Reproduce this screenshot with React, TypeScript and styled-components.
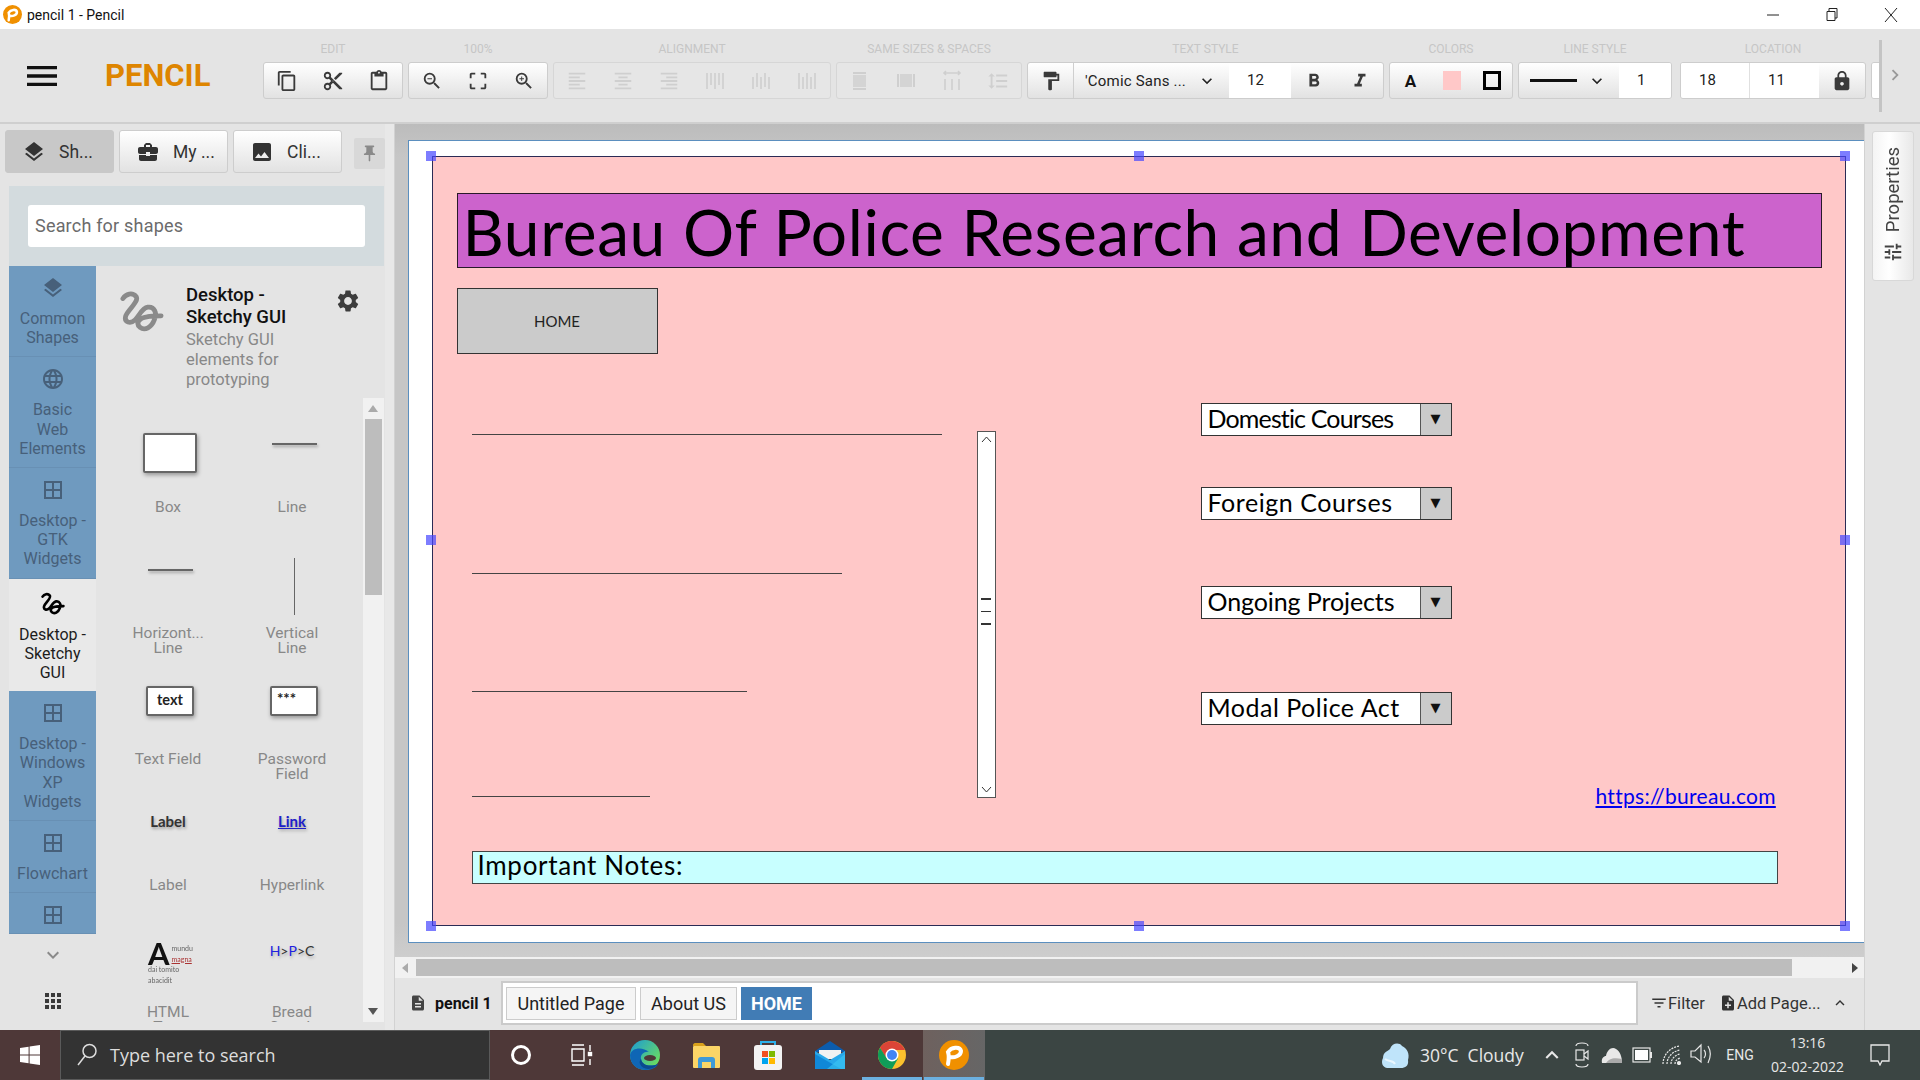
import React from 'react';
import styled, { createGlobalStyle } from 'styled-components';
import {
  MdApps,
  MdBorderAll,
  MdBusinessCenter,
  MdChevronRight,
  MdContentCopy,
  MdContentCut,
  MdContentPaste,
  MdCropFree,
  MdDescription,
  MdFilterList,
  MdFormatAlignCenter,
  MdFormatAlignLeft,
  MdFormatAlignRight,
  MdFormatBold,
  MdFormatItalic,
  MdFormatLineSpacing,
  MdFormatPaint,
  MdImage,
  MdKeyboardArrowDown,
  MdKeyboardArrowUp,
  MdLanguage,
  MdLayers,
  MdLock,
  MdMenu,
  MdNoteAdd,
  MdPushPin,
  MdSettings,
  MdTune,
  MdZoomIn,
  MdZoomOut,
} from 'react-icons/md';

const GlobalStyle = createGlobalStyle`
  html, body {
    margin: 0;
    padding: 0;
    width: 100%;
    height: 100%;
    overflow: hidden;
  }
  * {
    box-sizing: border-box;
  }
`;

const SKETCH = `"Comic Sans MS", Lato, sans-serif`;

// Window shell
const Shell = styled.div`
  display: grid;
  grid-template-rows: 29px 95px 906px 50px;
  width: 1920px;
  height: 1080px;
  overflow: hidden;
  background: #e4e4e4;
  font-family: Roboto, sans-serif;
`;

const TitleBar = styled.div`
  display: flex;
  align-items: center;
  background: #fff;
  padding-left: 3px;
`;

const TitleText = styled.span`
  margin-left: 5px;
  font-size: 14px;
  color: #111;
  flex: 1;
`;

const WindowButton = styled.div`
  display: flex;
  align-items: center;
  justify-content: center;
  width: 59px;
  height: 29px;
  color: #222;
`;

// Toolbar
const Toolbar = styled.div`
  display: flex;
  position: relative;
  background: #e4e4e4;
  border-bottom: 2px solid #cfcfcf;
`;

const MenuButton = styled.div`
  display: flex;
  align-items: center;
  justify-content: center;
  width: 84px;
  height: 93px;
  color: #111;
`;

const Brand = styled.div`
  width: 179px;
  padding: 29px 0 0 21px;
  color: #de8500;
  font-size: 31px;
  line-height: 36px;
  font-weight: 700;
`;

const ToolScroller = styled.div`
  display: flex;
  gap: 5px;
  width: 1617px;
  overflow: hidden;
`;

const ToolGroup = styled.div<{ $ml?: number }>`
  display: flex;
  flex-direction: column;
  align-items: center;
  flex: none;
  margin-left: ${(p) => p.$ml ?? 0}px;
`;

const GroupLabel = styled.div`
  height: 33px;
  padding-top: 13px;
  font-size: 12px;
  line-height: 15px;
  color: #c6c6c6;
  white-space: nowrap;
`;

const ToolBox = styled.div<{ $off?: boolean }>`
  display: flex;
  height: 37px;
  border-radius: 3px;
  overflow: hidden;
  border: 1px solid ${(p) => (p.$off ? '#d6d6d6' : '#cdcdcd')};
  background: ${(p) => (p.$off ? '#e6e6e6' : 'linear-gradient(#fff, #e2e2e2)')};
`;

const ToolButton = styled.div<{ $w?: number; $off?: boolean; $line?: boolean }>`
  display: flex;
  align-items: center;
  justify-content: center;
  width: ${(p) => p.$w ?? 46}px;
  flex: none;
  color: ${(p) => (p.$off ? '#cfcfcf' : '#3a3a3a')};
  font-size: 22px;
  border-right: ${(p) => (p.$line ? '1px solid #cfcfcf' : 'none')};
`;

const ToolSelect = styled.div<{ $w: number }>`
  display: flex;
  align-items: center;
  justify-content: space-between;
  width: ${(p) => p.$w}px;
  flex: none;
  padding: 0 12px 0 11px;
  font-size: 15px;
  letter-spacing: 0.2px;
  color: #222;
  white-space: nowrap;
`;

const ToolInput = styled.div<{ $w: number; $line?: boolean }>`
  width: ${(p) => p.$w}px;
  flex: none;
  background: #fff;
  padding: 8px 0 0 18px;
  font-size: 15px;
  line-height: 18px;
  color: #222;
  border-right: ${(p) => (p.$line ? '1px solid #e0e0e0' : 'none')};
`;

const ColorA = styled.span`
  font-size: 17px;
  font-weight: 700;
  color: #111;
`;

const FillSwatch = styled.span`
  width: 18px;
  height: 19px;
  background: #ffc8c8;
`;

const StrokeSwatch = styled.span`
  width: 18px;
  height: 19px;
  border: 3px solid #000;
`;

const LineSample = styled.span`
  width: 47px;
  height: 3px;
  background: #111;
`;

const ToolEdge = styled.div`
  position: absolute;
  left: 1879px;
  top: 11px;
  width: 3px;
  height: 72px;
  background: #c4c4c4;
`;

const ToolArrow = styled.div`
  position: absolute;
  left: 1884px;
  top: 35px;
  color: #999;
  font-size: 22px;
  display: flex;
`;

// Main row
const MainRow = styled.div`
  display: grid;
  grid-template-columns: 395px 1469px 56px;
  min-height: 0;
`;

const LeftPanel = styled.div`
  display: flex;
  flex-direction: column;
  min-height: 0;
  padding: 6px 10px 0 9px;
  border-right: 1px solid #d2d2d2;
  box-shadow: inset -9px 0 0 #e8e8e8;
`;

const TabRow = styled.div`
  display: flex;
  gap: 5px;
  height: 43px;
  margin: 0 -1px 13px -4px;
  align-items: flex-start;
`;

const PanelTab = styled.div<{ $active?: boolean }>`
  display: flex;
  align-items: center;
  gap: 13px;
  width: 109px;
  height: 43px;
  padding-left: 16px;
  border-radius: 3px;
  border: 1px solid ${(p) => (p.$active ? '#c8c8c8' : '#cdcdcd')};
  background: ${(p) => (p.$active ? '#c8c8c8' : 'linear-gradient(#fff, #e2e2e2)')};
  color: #333;
  font-size: 17.5px;
  svg {
    font-size: 24px;
    flex: none;
  }
`;

const PinButton = styled.div`
  display: flex;
  align-items: center;
  justify-content: center;
  width: 31px;
  height: 31px;
  margin: 8px 0 0 7px;
  border-radius: 2px;
  background: #d8d8d8;
  color: #8a8a8a;
  font-size: 19px;
`;

const SearchPanel = styled.div`
  height: 80px;
  padding: 19px 19px 0;
  background: #d3dbde;
`;

const SearchBox = styled.div`
  height: 42px;
  padding: 0 7px;
  border-radius: 3px;
  background: #fff;
  color: #6b6b6b;
  font-size: 18px;
  letter-spacing: 0.2px;
  line-height: 42px;
`;

const PanelBody = styled.div`
  display: flex;
  flex: 1;
  min-height: 0;
`;

const CategoryColumn = styled.div`
  display: flex;
  flex-direction: column;
  width: 87px;
  flex: none;
`;

const Category = styled.div<{ $active?: boolean; $cut?: boolean }>`
  display: flex;
  flex-direction: column;
  align-items: center;
  gap: 9px;
  flex: none;
  height: ${(p) => (p.$cut ? '41px' : 'auto')};
  padding: ${(p) => (p.$active ? '13px 0 8px' : '10px 0 9px')};
  overflow: hidden;
  background: ${(p) => (p.$active ? '#e9e9e9' : '#6f9abf')};
  color: ${(p) => (p.$active ? '#1c1c1c' : '#47607a')};
  border-bottom: 1px solid ${(p) => (p.$active ? '#e9e9e9' : '#6890b4')};
  font-size: 16px;
  line-height: 19.2px;
  text-align: center;
  svg {
    flex: none;
    width: 24px;
    height: 24px;
  }
`;

const CategoryLine = styled.div`
  white-space: nowrap;
`;

const CategoryFoot = styled.div`
  display: flex;
  flex-direction: column;
  align-items: center;
  padding-top: 9px;
  gap: 22px;
  color: #8a8a8a;
  font-size: 24px;
`;

const FootGrid = styled.span`
  display: flex;
  color: #3a3a3a;
`;

const ShapesPane = styled.div`
  display: flex;
  flex-direction: column;
  flex: 1;
  min-width: 0;
  padding-bottom: 8px;
`;

const PaneHeader = styled.div`
  display: flex;
  height: 132px;
  flex: none;
  padding: 18px 0 0 24px;
  > svg {
    flex: none;
    margin-top: 6px;
  }
`;

const PaneHeaderText = styled.div`
  width: 149px;
  margin-left: 22px;
  color: #888;
  font-size: 16.5px;
  line-height: 20px;
`;

const PaneTitle = styled.div`
  width: 110px;
  margin-bottom: 2px;
  color: #111;
  font-weight: 500;
  font-size: 18.5px;
  line-height: 22px;
`;

const GearButton = styled.div`
  display: flex;
  font-size: 26px;
  color: #3d3d3d;
  margin-top: 4px;
`;

const ShapesScroll = styled.div`
  display: flex;
  flex: 1;
  min-height: 0;
`;

const ShapeGrid = styled.div`
  display: grid;
  grid-template-columns: 124px 124px;
  grid-auto-rows: 126.25px;
  width: 268px;
  padding: 18px 0 0 10px;
  overflow: hidden;
`;

const ShapeCell = styled.div`
  display: flex;
  flex-direction: column;
  align-items: center;
`;

const ShapePreview = styled.div`
  display: flex;
  justify-content: center;
  height: 83.5px;
  width: 100%;
  padding-left: 4px;
`;

const ShapeName = styled.div`
  color: #888;
  font-size: 15.5px;
  line-height: 15px;
  text-align: center;
  width: 71px;
`;

const BoxPreview = styled.div`
  margin-top: 17px;
  width: 54px;
  height: 40px;
  background: #fff;
  border: 2px solid #666;
  border-radius: 2px;
  box-shadow: 1px 2px 4px rgba(0, 0, 0, 0.35);
`;

const FieldPreview = styled.div`
  margin-top: 17px;
  width: 48px;
  height: 30px;
  background: #fff;
  border: 2px solid #666;
  border-radius: 2px;
  box-shadow: 1px 2px 4px rgba(0, 0, 0, 0.35);
  font-family: ${SKETCH};
  font-weight: 700;
  font-size: 14.5px;
  line-height: 24px;
  text-align: center;
  color: #222;
`;

const DotsText = styled.div`
  font-size: 15px;
  line-height: 16px;
  padding: 2px 0 0 5px;
  text-align: left;
`;

const LinePreview = styled.div`
  margin-top: 27px;
  width: 45px;
  height: 2px;
  background: #666;
  box-shadow: 1px 2px 3px rgba(0, 0, 0, 0.3);
`;

const VerticalPreview = styled.div`
  margin-top: 16px;
  width: 1px;
  height: 57px;
  background: #666;
`;

const LabelPreview = styled.div`
  margin: 17px 0 0 -4px;
  font-family: ${SKETCH};
  font-weight: 700;
  font-size: 15px;
  line-height: 18px;
  color: #333;
  text-shadow: 1px 2px 3px rgba(0, 0, 0, 0.3);
`;

const LinkPreview = styled(LabelPreview)`
  color: #2020c8;
  text-decoration: underline;
`;

const CrumbPreview = styled.div`
  margin: 22px 0 0 -4px;
  font-family: ${SKETCH};
  font-size: 14px;
  line-height: 16px;
  color: #333;
  text-shadow: 1px 2px 3px rgba(0, 0, 0, 0.25);
  b {
    color: #2020e0;
    font-weight: 400;
  }
`;

const HtmlPreview = styled.div`
  margin-top: 22px;
  width: 44px;
  font-family: ${SKETCH};
  font-size: 7px;
  line-height: 10.5px;
  color: #666;
  filter: blur(0.3px);
`;

const HtmlHead = styled.div`
  display: flex;
  gap: 2px;
`;

const HtmlLetter = styled.span`
  font-size: 31px;
  font-weight: 700;
  line-height: 21px;
  color: #111;
`;

const HtmlAccent = styled.div`
  color: #a33;
  text-decoration: underline;
`;

const ScrollTrack = styled.div`
  position: relative;
  width: 21px;
  background: #f1f1f1;
`;

const ScrollThumb = styled.div`
  position: absolute;
  left: 2px;
  top: 21px;
  width: 17px;
  height: 176px;
  background: #bdbdbd;
`;

const ScrollArrow = styled.span<{ $down?: boolean; $dark?: boolean }>`
  position: absolute;
  left: 5px;
  ${(p) => (p.$down ? 'bottom: 7px;' : 'top: 7px;')}
  width: 0;
  height: 0;
  border-left: 5px solid transparent;
  border-right: 5px solid transparent;
  ${(p) =>
    p.$down
      ? `border-top: 7px solid ${p.$dark ? '#555' : '#aaa'};`
      : `border-bottom: 7px solid ${p.$dark ? '#555' : '#aaa'};`}
`;

// Canvas
const CenterColumn = styled.div`
  display: flex;
  flex-direction: column;
  min-width: 0;
`;

const CanvasArea = styled.div`
  display: flex;
  height: 833px;
  flex: none;
  padding: 16px 0 14px 13px;
  background: linear-gradient(#bcbcbc, #c6c6c6 4%, #c6c6c6 96%, #cdcdcd);
`;

const Page = styled.div`
  display: flex;
  flex: 1;
  padding: 15px 18px 16px 23px;
  background: #fff;
  border: 1px solid #5b8fbf;
  border-right: none;
`;

const Drawing = styled.div`
  position: relative;
  flex: 1;
  background: #ffc8c8;
  border: 1.5px solid #2b2b55;
  font-family: ${SKETCH};
`;

const Placed = styled.div<{ $x: number; $y: number; $w: number; $h: number }>`
  position: absolute;
  left: ${(p) => p.$x - 433.5}px;
  top: ${(p) => p.$y - 157.5}px;
  width: ${(p) => p.$w}px;
  height: ${(p) => p.$h}px;
`;

const TitleBanner = styled(Placed)`
  background: #cc63cc;
  border: 1.5px solid #2a1a2a;
  padding-left: 5px;
  color: #000;
  font-size: 64px;
  line-height: 75px;
  white-space: nowrap;
  letter-spacing: 0.63px;
`;

const HomeBox = styled(Placed)`
  display: flex;
  align-items: center;
  justify-content: center;
  background: #cbcbcb;
  border: 1.5px solid #333;
  font-size: 15px;
  color: #222;
`;

const SketchLine = styled(Placed)`
  background: #444;
`;

const VScroll = styled(Placed)`
  background: #fff;
  border: 1.5px solid #555;
  display: flex;
  flex-direction: column;
  align-items: center;
  justify-content: space-between;
  padding: 4px 0;
  color: #333;
  font-size: 16px;
`;

const VGrip = styled.div`
  display: flex;
  flex-direction: column;
  gap: 11px;
  margin-top: -5px;
`;

const VGripBar = styled.span`
  display: block;
  width: 10px;
  height: 1.5px;
  background: #333;
`;

const Dropdown = styled(Placed)`
  display: flex;
  background: #fff;
  border: 1.5px solid #333;
  font-size: 25px;
  line-height: 28px;
  color: #000;
`;

const DropdownText = styled.div<{ $spacing: number }>`
  flex: 1;
  padding-left: 6px;
  letter-spacing: ${(p) => p.$spacing}px;
  white-space: nowrap;
`;

const DropdownArrow = styled.div`
  display: flex;
  align-items: center;
  justify-content: center;
  width: 31px;
  background: #cbcbcb;
  border-left: 1.5px solid #555;
  font-size: 13px;
  color: #111;
  font-family: 'DejaVu Sans', sans-serif;
`;

const LinkText = styled(Placed)`
  color: #0000ee;
  font-size: 21px;
  letter-spacing: 0.3px;
  line-height: 24px;
  text-decoration: underline;
  white-space: nowrap;
`;

const NoteBox = styled(Placed)`
  background: #c8ffff;
  border: 1.5px solid #444;
  padding-left: 5px;
  font-size: 26px;
  line-height: 27px;
  color: #000;
  letter-spacing: 0.7px;
`;

const Handle = styled.span<{ $x: number; $y: number }>`
  position: absolute;
  left: ${(p) => p.$x - 438.5}px;
  top: ${(p) => p.$y - 162.5}px;
  width: 10px;
  height: 10px;
  background: rgba(70, 70, 255, 0.7);
`;

const HScroll = styled.div`
  display: flex;
  align-items: center;
  height: 21px;
  flex: none;
  background: #f1f1f1;
  position: relative;
`;

const HThumb = styled.div`
  margin-left: 21px;
  width: 1376px;
  height: 17px;
  background: #bdbdbd;
`;

const HArrow = styled.span<{ $right?: boolean }>`
  position: absolute;
  top: 6px;
  ${(p) => (p.$right ? 'right: 6px;' : 'left: 7px;')}
  width: 0;
  height: 0;
  border-top: 5px solid transparent;
  border-bottom: 5px solid transparent;
  ${(p) => (p.$right ? 'border-left: 6px solid #444;' : 'border-right: 6px solid #aaa;')}
`;

const PagesBar = styled.div`
  display: flex;
  align-items: center;
  flex: 1;
  padding: 0 0 2px 14px;
  background: #e4e4e4;
  font-size: 16px;
`;

const DocName = styled.div`
  display: flex;
  align-items: center;
  gap: 8px;
  width: 92px;
  font-weight: 700;
  color: #111;
  svg {
    font-size: 18px;
    color: #444;
    flex: none;
  }
`;

const PageTabs = styled.div`
  display: flex;
  align-items: center;
  gap: 4px;
  width: 1137px;
  height: 44px;
  padding-left: 3px;
  background: #fff;
  border: 2px solid #cbcbcb;
`;

const PageTab = styled.div<{ $w: number; $active?: boolean }>`
  display: flex;
  align-items: center;
  justify-content: center;
  width: ${(p) => p.$w}px;
  height: 33px;
  font-size: 18px;
  font-weight: ${(p) => (p.$active ? 700 : 400)};
  color: ${(p) => (p.$active ? '#fff' : '#222')};
  background: ${(p) => (p.$active ? '#417cb5' : '#f5f5f5')};
  border: 1px solid ${(p) => (p.$active ? '#417cb5' : '#ccc')};
`;

const PageAction = styled.div<{ $ml: number }>`
  display: flex;
  align-items: center;
  margin-left: ${(p) => p.$ml}px;
  color: #333;
  white-space: nowrap;
  font-size: 16.5px;
  svg {
    font-size: 18px;
    flex: none;
  }
`;

const RightDock = styled.div`
  padding: 7px 7px 0;
  background: #e4e4e4;
  border-left: 1px solid #d2d2d2;
`;

const PropertiesButton = styled.div`
  display: flex;
  flex-direction: column;
  align-items: center;
  gap: 9px;
  width: 42px;
  height: 150px;
  padding-top: 15px;
  border: 1px solid #d8d8d8;
  border-radius: 3px;
  background: linear-gradient(to right, #f4f4f4, #fff 40%, #e8e8e8);
  color: #444;
  svg {
    font-size: 22px;
  }
`;

const PropertiesText = styled.span`
  writing-mode: vertical-rl;
  transform: rotate(180deg);
  font-size: 18.5px;
  line-height: 20px;
`;

// Taskbar
const TaskBar = styled.div`
  display: flex;
  color: #fff;
`;

const TaskLeft = styled.div`
  display: flex;
  align-items: stretch;
  width: 985px;
  background: #4e3838;
`;

const StartButton = styled.div`
  display: flex;
  align-items: center;
  justify-content: center;
  width: 60px;
`;

const TaskSearch = styled.div`
  display: flex;
  align-items: center;
  gap: 12px;
  width: 430px;
  padding-left: 15px;
  background: #333;
  border: 1px solid #5a5a5a;
  color: #ddd;
  font-family: 'Open Sans', sans-serif;
  font-size: 18px;
`;

const TaskSlot = styled.div<{ $active?: boolean; $running?: boolean }>`
  position: relative;
  display: flex;
  align-items: center;
  justify-content: center;
  width: 61.9px;
  background: ${(p) => (p.$active ? 'linear-gradient(to right, #6e615e, #666)' : 'none')};
  ${(p) =>
    p.$running
      ? `&::after {
    content: '';
    position: absolute;
    left: 1px;
    right: 1px;
    bottom: 0;
    height: 3px;
    background: #6cb0e0;
  }`
      : ''}
`;

const TaskRight = styled.div`
  display: flex;
  align-items: center;
  justify-content: flex-end;
  flex: 1;
  padding-right: 10px;
  background: #3b4543;
`;

const WeatherItem = styled.div`
  display: flex;
  align-items: center;
  gap: 10px;
  width: 156px;
  font-family: 'Open Sans', sans-serif;
  font-size: 17.5px;
  color: #e8e8e8;
  white-space: pre;
`;

const TraySlot = styled.div<{ $w?: number }>`
  display: flex;
  align-items: center;
  justify-content: center;
  width: ${(p) => p.$w ?? 30}px;
  height: 50px;
  color: #e8e8e8;
`;

const LangText = styled.span`
  font-size: 14px;
  color: #e8e8e8;
`;

const ClockText = styled.div`
  text-align: center;
  font-family: 'Open Sans', sans-serif;
  font-size: 14px;
  line-height: 24px;
  color: #e8e8e8;
  white-space: nowrap;
`;

// Drawn icons
const PencilLogo = ({ size }: { size: number }) => (
  <svg width={size} height={size} viewBox="0 0 30 30">
    <circle cx="15" cy="15" r="15" fill="#f09000" />
    <path
      d="M9 24 C10 19 10 15 9 12 C12 7 21 6 22 11 C22 16 15 18 11 17"
      fill="none"
      stroke="#fff"
      strokeWidth="4"
      strokeLinecap="round"
    />
  </svg>
);

const SquiggleIcon = ({ size, color }: { size: number; color: string }) => (
  <svg width={size} height={size} viewBox="0 0 46 44">
    <path
      d="M3 8 C6 3 13 1 17 6 C20 11 8 20 6 26 C4 33 11 35 16 30 C20 26 23 18 29 17 C36 16 39 23 36 30 C33 38 26 42 21 38 C16 34 20 28 28 27 C33 26 38 26 43 26"
      fill="none"
      stroke={color}
      strokeWidth="5"
      strokeLinecap="round"
    />
  </svg>
);

const BarsIcon = ({ dy }: { dy: number[] }) => (
  <svg width="20" height="20" viewBox="0 0 20 20" fill="none" stroke="currentColor" strokeWidth="1.6">
    {[2, 6, 10, 14, 18].map((x, i) => (
      <path key={x} d={`M${x} ${i % 2 ? dy[0] : dy[1]}V${i % 2 ? dy[2] : 18}`} />
    ))}
  </svg>
);

const SameHeightIcon = () => (
  <svg width="18" height="20" viewBox="0 0 18 20" fill="currentColor">
    <rect x="2" y="1" width="13" height="2" />
    <rect x="2" y="4" width="13" height="12" opacity="0.8" />
    <rect x="2" y="17" width="13" height="2" />
  </svg>
);

const SameWidthIcon = () => (
  <svg width="20" height="18" viewBox="0 0 20 18" fill="currentColor">
    <rect x="1" y="2" width="2" height="13" />
    <rect x="4" y="2" width="12" height="13" opacity="0.8" />
    <rect x="17" y="2" width="2" height="13" />
  </svg>
);

const SpaceHIcon = () => (
  <svg width="20" height="22" viewBox="0 0 20 22" fill="none" stroke="currentColor" strokeWidth="1.6">
    <path d="M2 3H18M4 1L2 3L4 5M16 1L18 3L16 5M3 9V20M10 9V20M17 9V20" />
  </svg>
);

const WindowsLogo = () => (
  <svg width="20" height="20" viewBox="0 0 20 20" fill="#fff">
    <path d="M0 3L8.6 1.8V9.5H0ZM9.6 1.6L20 0V9.5H9.6ZM0 10.5H8.6V18.2L0 17ZM9.6 10.5H20V20L9.6 18.4Z" />
  </svg>
);

const SearchGlass = () => (
  <svg width="22" height="24" viewBox="0 0 22 24" fill="none" stroke="#ddd" strokeWidth="1.5">
    <circle cx="13.5" cy="8" r="6.5" />
    <path d="M9 13L2 22" />
  </svg>
);

const CortanaIcon = () => (
  <svg width="22" height="22" viewBox="0 0 22 22">
    <circle cx="11" cy="11" r="8.5" fill="none" stroke="#fff" strokeWidth="3" />
  </svg>
);

const TaskViewIcon = () => (
  <svg width="24" height="22" viewBox="0 0 24 22" fill="none" stroke="#fff" strokeWidth="1.4">
    <path d="M1 1H13M1 21H13M1 5H13V17H1ZM19 1V7M19 15V21" />
    <rect x="17.5" y="8.5" width="3" height="3" fill="#fff" />
  </svg>
);

const EdgeIcon = () => (
  <svg width="32" height="32" viewBox="0 0 32 32">
    <defs>
      <linearGradient id="edgeTop" x1="0" y1="0" x2="1" y2="0.8">
        <stop offset="0" stopColor="#1a9ad6" />
        <stop offset="1" stopColor="#6fe05a" />
      </linearGradient>
    </defs>
    <circle cx="16" cy="16" r="15" fill="url(#edgeTop)" />
    <path d="M1 16 C1 26 9 31 16 31 C22 31 27 29 29 25 C22 28 13 27 12 20 C11 15 16 12 20 13 C14 8 3 8 1 16Z" fill="#0f66b5" />
    <path d="M12 20 C13 27 22 28 29 25 C25 31 14 32 11 25 C10 23 11 21 12 20Z" fill="#0b4b8f" />
    <ellipse cx="21" cy="19" rx="6" ry="3" fill="#4e3838" />
  </svg>
);

const ExplorerIcon = () => (
  <svg width="29" height="27" viewBox="0 0 29 27">
    <path d="M1 3C1 2 2 1 3 1H11L14 4H1Z" fill="#d9a11c" />
    <rect x="1" y="4" width="27" height="22" rx="1" fill="#fbd567" />
    <path d="M6 26V18C6 16 7 15 9 15H20C22 15 23 16 23 18V26H19V20H10V26Z" fill="#3f9ad8" />
  </svg>
);

const StoreIcon = () => (
  <svg width="30" height="30" viewBox="0 0 30 30">
    <path d="M8 6V2H22V6" fill="none" stroke="#2cb0ea" strokeWidth="2" />
    <rect x="1" y="5" width="28" height="25" rx="3" fill="#f3f3f3" />
    <rect x="9" y="11" width="6" height="6" fill="#f25022" />
    <rect x="16" y="11" width="6" height="6" fill="#7fba00" />
    <rect x="9" y="18" width="6" height="6" fill="#00a4ef" />
    <rect x="16" y="18" width="6" height="6" fill="#ffb900" />
  </svg>
);

const MailIcon = () => (
  <svg width="30" height="29" viewBox="0 0 30 29">
    <path d="M0 10L15 0L30 10V11H0Z" fill="#0b5cae" />
    <path d="M4 9H26V18H4Z" fill="#f2f2f2" />
    <path d="M0 10L15 19L30 10V28H0Z" fill="#28a8ea" />
    <path d="M0 28V13L26 28Z" fill="#1088d8" />
    <path d="M30 13V28H12Z" fill="#3cc8f4" opacity="0.6" />
  </svg>
);

const ChromeIcon = () => (
  <svg width="28" height="28" viewBox="0 0 28 28">
    <circle cx="14" cy="14" r="14" fill="#fbc02d" />
    <path d="M14 0C9 0 4.5 2.6 2 6.7L8 17L14 9H27C24.7 3.7 19.6 0 14 0Z" fill="#db4437" />
    <path d="M2 6.7C-0.7 11 -0.7 17 2 21.3C4.5 25.5 9 28 14 28L20 17.5L8.5 17Z" fill="#0f9d58" />
    <circle cx="14" cy="14" r="6.5" fill="#fff" />
    <circle cx="14" cy="14" r="5" fill="#4285f4" />
  </svg>
);

const CloudIcon = () => (
  <svg width="29" height="27" viewBox="0 0 29 27">
    <path d="M6 26C1 25 0 20 2 16C2 10 7 9 9 7C11 1 18 0 21 4C26 6 29 12 27 18C28 24 24 26 20 26Z" fill="#bfe4fa" />
    <path d="M4 17C8 20 12 18 14 22" fill="none" stroke="#eaf7ff" strokeWidth="2" />
  </svg>
);

const TrayMeet = () => (
  <svg width="16" height="26" viewBox="0 0 16 26" fill="none" stroke="#e8e8e8" strokeWidth="1.2">
    <path d="M2 4C2 2 4 1 8 1C12 1 14 2 14 4M2 22C2 24 4 25 8 25C12 25 14 24 14 22" />
    <rect x="2" y="8" width="8" height="10" />
    <path d="M10 12L14 9V17L10 14" />
  </svg>
);

const TrayOneDrive = () => (
  <svg width="22" height="22" viewBox="0 0 22 22">
    <path d="M1 19C0 14 3 12 5 12C6 6 11 2 15 5C19 7 21 13 21 19Z" fill="#e8e8e8" />
    <path d="M5 19C8 15 12 13 21 15V19Z" fill="#aaa" />
  </svg>
);

const TrayBattery = () => (
  <svg width="20" height="16" viewBox="0 0 20 16">
    <rect x="1" y="1" width="17" height="14" fill="none" stroke="#e8e8e8" strokeWidth="1.2" />
    <rect x="3" y="3" width="13" height="10" fill="#fff" />
    <rect x="18" y="5" width="2" height="6" fill="#e8e8e8" />
  </svg>
);

const TrayWifi = () => (
  <svg width="20" height="20" viewBox="0 0 20 20" fill="none" stroke="#e8e8e8" strokeWidth="1.2">
    <path d="M1 19C1 10 8 2 18 1M5 19C5 12 11 6 18 5M9 19C9 14 13 10 18 9M13 19C13 16 15 14 18 13" strokeDasharray="2 1" />
    <circle cx="17" cy="18" r="1.5" fill="#e8e8e8" />
  </svg>
);

const TrayVolume = () => (
  <svg width="22" height="24" viewBox="0 0 22 24" fill="none" stroke="#e8e8e8" strokeWidth="1.2">
    <path d="M1 8H5L11 2V19L5 14H1Z" />
    <path d="M14 7C16 9 16 13 14 15M18 3C21 8 21 14 18 20" />
  </svg>
);

const TrayNotify = () => (
  <svg width="20" height="22" viewBox="0 0 20 22" fill="none" stroke="#e8e8e8" strokeWidth="1.3">
    <path d="M1 1H19V17H12L10 21L8 17H1Z" />
  </svg>
);

const categories = [
  { lines: ['Common', 'Shapes'], icon: <MdLayers /> },
  { lines: ['Basic', 'Web', 'Elements'], icon: <MdLanguage /> },
  { lines: ['Desktop -', 'GTK', 'Widgets'], icon: <MdBorderAll /> },
  { lines: ['Desktop -', 'Sketchy', 'GUI'], icon: <SquiggleIcon size={24} color="#000" />, active: true },
  { lines: ['Desktop -', 'Windows', 'XP', 'Widgets'], icon: <MdBorderAll /> },
  { lines: ['Flowchart'], icon: <MdBorderAll /> },
];

const shapes = [
  { name: 'Box', preview: <BoxPreview /> },
  { name: 'Line', preview: <LinePreview /> },
  { name: 'Horizont... Line', preview: <LinePreview /> },
  { name: 'Vertical Line', preview: <VerticalPreview /> },
  { name: 'Text Field', preview: <FieldPreview>text</FieldPreview> },
  { name: 'Password Field', preview: <FieldPreview><DotsText>***</DotsText></FieldPreview> },
  { name: 'Label', preview: <LabelPreview>Label</LabelPreview> },
  { name: 'Hyperlink', preview: <LinkPreview>Link</LinkPreview> },
  {
    name: 'HTML Text',
    preview: (
      <HtmlPreview>
        <HtmlHead>
          <HtmlLetter>A</HtmlLetter>
          <div>
            mundu
            <HtmlAccent>magna</HtmlAccent>
          </div>
        </HtmlHead>
        <div>dai tomito</div>
        <div>abacidit</div>
      </HtmlPreview>
    ),
  },
  {
    name: 'Bread Crumb',
    preview: (
      <CrumbPreview>
        <b>H</b>&gt;<b>P</b>&gt;C
      </CrumbPreview>
    ),
  },
];

const dropdowns = [
  { label: 'Domestic Courses', y: 403, spacing: -0.85 },
  { label: 'Foreign Courses', y: 487, spacing: 0.55 },
  { label: 'Ongoing Projects', y: 586, spacing: -0.1 },
  { label: 'Modal Police Act', y: 692, spacing: 0.5 },
];

const sketchLines = [
  { y: 434, w: 470 },
  { y: 573, w: 370 },
  { y: 691, w: 275 },
  { y: 796, w: 178 },
];

const handles = [
  [431, 156],
  [1139, 156],
  [1845, 156],
  [431, 540],
  [1845, 540],
  [431, 926],
  [1139, 926],
  [1845, 926],
];

export default function App() {
  return (
    <Shell>
      <GlobalStyle />
      <TitleBar>
        <PencilLogo size={19} />
        <TitleText>pencil 1 - Pencil</TitleText>
        <WindowButton>
          <svg width="12" height="12" viewBox="0 0 12 12" stroke="#222"><path d="M0 6H12" /></svg>
        </WindowButton>
        <WindowButton>
          <svg width="12" height="13" viewBox="0 0 12 13" fill="none" stroke="#222"><path d="M1 3.5H9V12.5H1ZM3 3V0.5H11V10H9" /></svg>
        </WindowButton>
        <WindowButton>
          <svg width="14" height="14" viewBox="0 0 14 14" stroke="#222"><path d="M1 0L13 14M13 0L1 14" /></svg>
        </WindowButton>
      </TitleBar>

      <Toolbar>
        <MenuButton><MdMenu size={40} /></MenuButton>
        <Brand>PENCIL</Brand>
        <ToolScroller>
          <ToolGroup>
            <GroupLabel>EDIT</GroupLabel>
            <ToolBox>
              <ToolButton><MdContentCopy /></ToolButton>
              <ToolButton><MdContentCut /></ToolButton>
              <ToolButton><MdContentPaste /></ToolButton>
            </ToolBox>
          </ToolGroup>
          <ToolGroup>
            <GroupLabel>100%</GroupLabel>
            <ToolBox>
              <ToolButton><MdZoomOut /></ToolButton>
              <ToolButton><MdCropFree /></ToolButton>
              <ToolButton><MdZoomIn /></ToolButton>
            </ToolBox>
          </ToolGroup>
          <ToolGroup>
            <GroupLabel>ALIGNMENT</GroupLabel>
            <ToolBox $off>
              <ToolButton $off><MdFormatAlignLeft /></ToolButton>
              <ToolButton $off><MdFormatAlignCenter /></ToolButton>
              <ToolButton $off><MdFormatAlignRight /></ToolButton>
              <ToolButton $off><BarsIcon dy={[2, 2, 14]} /></ToolButton>
              <ToolButton $off><BarsIcon dy={[2, 6, 16]} /></ToolButton>
              <ToolButton $off><BarsIcon dy={[6, 2, 18]} /></ToolButton>
            </ToolBox>
          </ToolGroup>
          <ToolGroup>
            <GroupLabel>SAME SIZES &amp; SPACES</GroupLabel>
            <ToolBox $off>
              <ToolButton $off><SameHeightIcon /></ToolButton>
              <ToolButton $off><SameWidthIcon /></ToolButton>
              <ToolButton $off><SpaceHIcon /></ToolButton>
              <ToolButton $off><MdFormatLineSpacing /></ToolButton>
            </ToolBox>
          </ToolGroup>
          <ToolGroup>
            <GroupLabel>TEXT STYLE</GroupLabel>
            <ToolBox>
              <ToolButton $line><MdFormatPaint /></ToolButton>
              <ToolSelect $w={155}>'Comic Sans ... <MdKeyboardArrowDown size={20} /></ToolSelect>
              <ToolInput $w={62}>12</ToolInput>
              <ToolButton><MdFormatBold /></ToolButton>
              <ToolButton><MdFormatItalic /></ToolButton>
            </ToolBox>
          </ToolGroup>
          <ToolGroup>
            <GroupLabel>COLORS</GroupLabel>
            <ToolBox>
              <ToolButton $w={41}><ColorA>A</ColorA></ToolButton>
              <ToolButton $w={41}><FillSwatch /></ToolButton>
              <ToolButton $w={40}><StrokeSwatch /></ToolButton>
            </ToolBox>
          </ToolGroup>
          <ToolGroup>
            <GroupLabel>LINE STYLE</GroupLabel>
            <ToolBox>
              <ToolSelect $w={100}><LineSample /><MdKeyboardArrowDown size={20} /></ToolSelect>
              <ToolInput $w={52}>1</ToolInput>
            </ToolBox>
          </ToolGroup>
          <ToolGroup $ml={3}>
            <GroupLabel>LOCATION</GroupLabel>
            <ToolBox>
              <ToolInput $w={69} $line>18</ToolInput>
              <ToolInput $w={69}>11</ToolInput>
              <ToolButton><MdLock /></ToolButton>
            </ToolBox>
          </ToolGroup>
          <ToolGroup>
            <GroupLabel>&nbsp;</GroupLabel>
            <ToolBox><ToolInput $w={40} /></ToolBox>
          </ToolGroup>
        </ToolScroller>
        <ToolEdge />
        <ToolArrow><MdChevronRight /></ToolArrow>
      </Toolbar>

      <MainRow>
        <LeftPanel>
          <TabRow>
            <PanelTab $active><MdLayers />Sh...</PanelTab>
            <PanelTab><MdBusinessCenter />My ...</PanelTab>
            <PanelTab><MdImage />Cli...</PanelTab>
            <PinButton><MdPushPin /></PinButton>
          </TabRow>
          <SearchPanel>
            <SearchBox>Search for shapes</SearchBox>
          </SearchPanel>
          <PanelBody>
            <CategoryColumn>
              {categories.map((c) => (
                <Category key={c.lines.join(' ')} $active={c.active}>
                  {c.icon}
                  <div>
                    {c.lines.map((line) => (
                      <CategoryLine key={line}>{line}</CategoryLine>
                    ))}
                  </div>
                </Category>
              ))}
              <Category $cut><MdBorderAll /></Category>
              <CategoryFoot>
                <MdKeyboardArrowDown />
                <FootGrid><MdApps /></FootGrid>
              </CategoryFoot>
            </CategoryColumn>
            <ShapesPane>
              <PaneHeader>
                <SquiggleIcon size={44} color="#8a8a8a" />
                <PaneHeaderText>
                  <PaneTitle>Desktop - Sketchy GUI</PaneTitle>
                  Sketchy GUI elements for prototyping
                </PaneHeaderText>
                <GearButton><MdSettings /></GearButton>
              </PaneHeader>
              <ShapesScroll>
                <ShapeGrid>
                  {shapes.map((s) => (
                    <ShapeCell key={s.name}>
                      <ShapePreview>{s.preview}</ShapePreview>
                      <ShapeName>{s.name}</ShapeName>
                    </ShapeCell>
                  ))}
                </ShapeGrid>
                <ScrollTrack>
                  <ScrollArrow />
                  <ScrollThumb />
                  <ScrollArrow $down $dark />
                </ScrollTrack>
              </ShapesScroll>
            </ShapesPane>
          </PanelBody>
        </LeftPanel>

        <CenterColumn>
          <CanvasArea>
            <Page>
              <Drawing>
                <TitleBanner $x={457} $y={193} $w={1365} $h={75}>
                  Bureau Of Police Research and Development
                </TitleBanner>
                <HomeBox $x={457} $y={288} $w={201} $h={66}>HOME</HomeBox>
                {sketchLines.map((l) => (
                  <SketchLine key={l.y} $x={472} $y={l.y} $w={l.w} $h={1} />
                ))}
                <VScroll $x={977} $y={431} $w={19} $h={367}>
                  <svg width="11" height="7" viewBox="0 0 11 7" fill="none" stroke="#333"><path d="M1 6L5.5 1L10 6" /></svg>
                  <VGrip><VGripBar /><VGripBar /><VGripBar /></VGrip>
                  <svg width="11" height="7" viewBox="0 0 11 7" fill="none" stroke="#333"><path d="M1 1L5.5 6L10 1" /></svg>
                </VScroll>
                {dropdowns.map((d) => (
                  <Dropdown key={d.label} $x={1201} $y={d.y} $w={251} $h={33}>
                    <DropdownText $spacing={d.spacing}>{d.label}</DropdownText>
                    <DropdownArrow>▼</DropdownArrow>
                  </Dropdown>
                ))}
                <LinkText $x={1596} $y={784} $w={182} $h={24}>https://bureau.com</LinkText>
                <NoteBox $x={472} $y={851} $w={1306} $h={33}>Important Notes:</NoteBox>
                {handles.map(([x, y]) => (
                  <Handle key={`${x}-${y}`} $x={x} $y={y} />
                ))}
              </Drawing>
            </Page>
          </CanvasArea>
          <HScroll>
            <HArrow />
            <HThumb />
            <HArrow $right />
          </HScroll>
          <PagesBar>
            <DocName><MdDescription />pencil 1</DocName>
            <PageTabs>
              <PageTab $w={130}>Untitled Page</PageTab>
              <PageTab $w={97}>About US</PageTab>
              <PageTab $w={71} $active>HOME</PageTab>
            </PageTabs>
            <PageAction $ml={12}><MdFilterList />Filter</PageAction>
            <PageAction $ml={14}><MdNoteAdd />Add Page...</PageAction>
            <PageAction $ml={10}><MdKeyboardArrowUp /></PageAction>
          </PagesBar>
        </CenterColumn>

        <RightDock>
          <PropertiesButton>
            <PropertiesText>Properties</PropertiesText>
            <MdTune />
          </PropertiesButton>
        </RightDock>
      </MainRow>

      <TaskBar>
        <TaskLeft>
          <StartButton><WindowsLogo /></StartButton>
          <TaskSearch><SearchGlass />Type here to search</TaskSearch>
          <TaskSlot><CortanaIcon /></TaskSlot>
          <TaskSlot><TaskViewIcon /></TaskSlot>
          <TaskSlot><EdgeIcon /></TaskSlot>
          <TaskSlot><ExplorerIcon /></TaskSlot>
          <TaskSlot><StoreIcon /></TaskSlot>
          <TaskSlot><MailIcon /></TaskSlot>
          <TaskSlot $running><ChromeIcon /></TaskSlot>
          <TaskSlot $active $running><PencilLogo size={30} /></TaskSlot>
        </TaskLeft>
        <TaskRight>
          <WeatherItem><CloudIcon />{'30°C  Cloudy'}</WeatherItem>
          <TraySlot><MdKeyboardArrowUp size={26} /></TraySlot>
          <TraySlot><TrayMeet /></TraySlot>
          <TraySlot><TrayOneDrive /></TraySlot>
          <TraySlot><TrayBattery /></TraySlot>
          <TraySlot><TrayWifi /></TraySlot>
          <TraySlot $w={28}><TrayVolume /></TraySlot>
          <TraySlot $w={50}><LangText>ENG</LangText></TraySlot>
          <TraySlot $w={85}><ClockText>13:16<br />02-02-2022</ClockText></TraySlot>
          <TraySlot $w={60}><TrayNotify /></TraySlot>
        </TaskRight>
      </TaskBar>
    </Shell>
  );
}
